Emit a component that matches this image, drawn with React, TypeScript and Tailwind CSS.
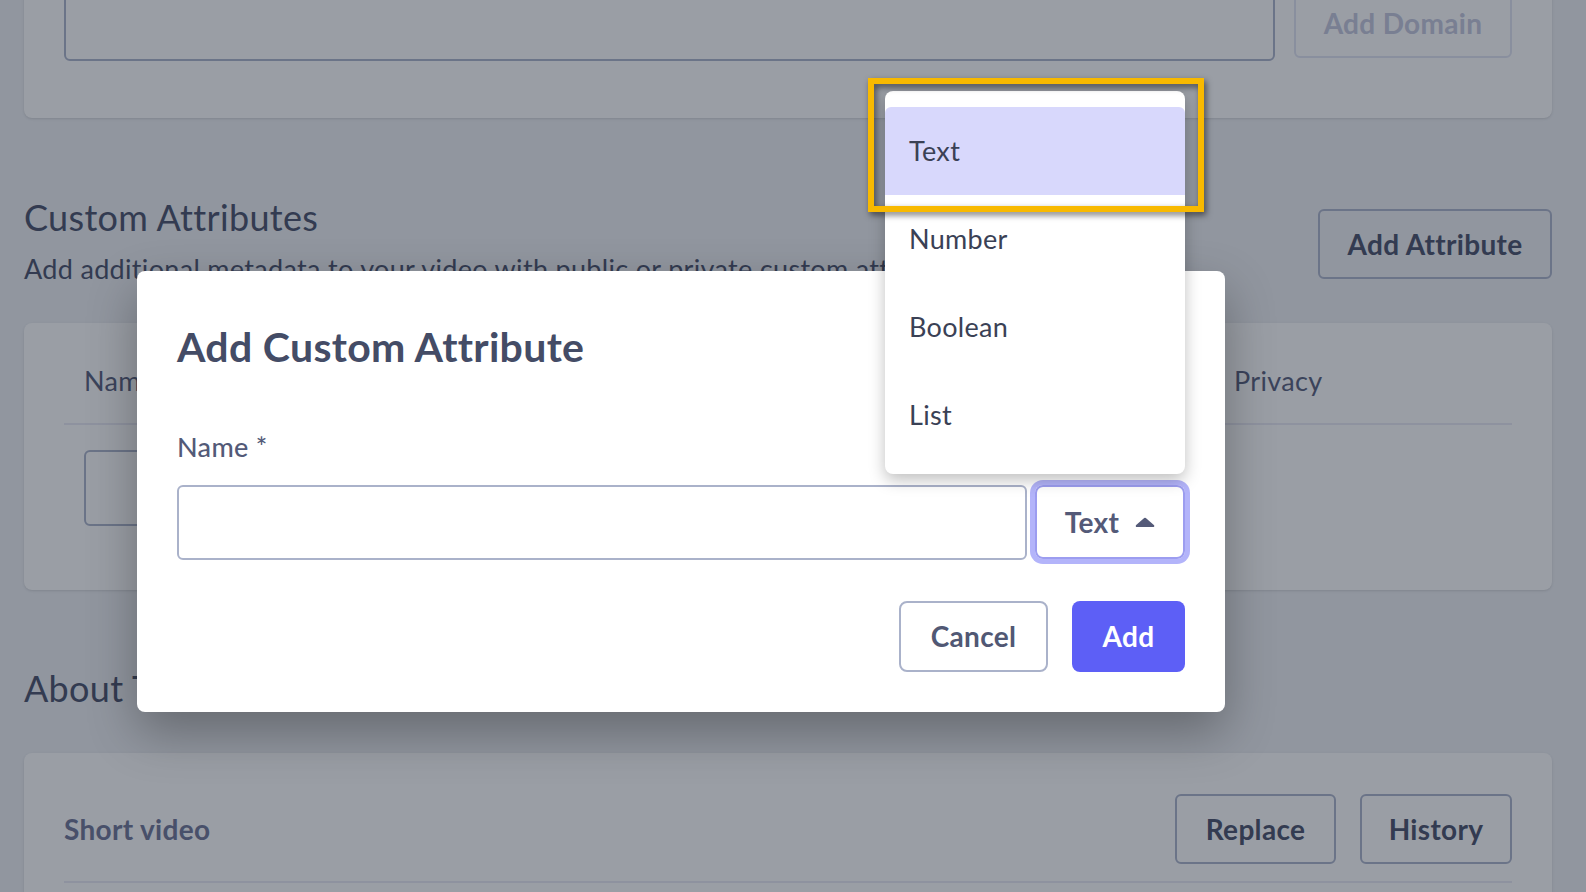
import { ReactNode } from 'react';

// outlined button used on the page behind the modal
function OutlineButton({ children, className }: { children: ReactNode; className?: string }) {
  return (
    <button
      className={`flex h-[70px] items-center justify-center rounded-md border-2 border-[#aab2ca] text-[28px] font-bold text-[#444c66] ${className ?? ''}`}
    >
      {children}
    </button>
  );
}

const types = ['Text', 'Number', 'Boolean', 'List'];

export default function App() {
  return (
    <div className="relative h-[892px] w-full overflow-hidden bg-[#eef0f4] font-['Lato',sans-serif] tracking-[0.02em] text-[#444c66]">
      <main className="pl-6 pr-[34px]">
        {/* domains card (scrolled past) */}
        <section className="-mt-[60px] rounded-lg bg-white px-10 pb-[57px] pt-5 shadow-sm">
          <div className="flex items-start gap-[19px]">
            <div className="h-[101px] flex-1 rounded-md border-2 border-[#aab2ca]" />
            <button className="mt-[28px] h-[70px] w-[218px] rounded-md border-2 border-[#e1e4f3] text-[28px] font-bold text-[#c3c6dd]">
              Add Domain
            </button>
          </div>
        </section>

        {/* custom attributes */}
        <div className="mt-[78px] flex items-start justify-between">
          <div>
            <h2 className="text-[36px] leading-[1.2]">Custom Attributes</h2>
            <p className="mt-[14px] whitespace-nowrap text-[27px] leading-[1.2]">
              Add additional metadata to your video with public or private custom attributes.
            </p>
          </div>
          <OutlineButton className="mt-[13px] w-[234px]">Add Attribute</OutlineButton>
        </div>

        <section className="mt-[37px] rounded-lg bg-white px-10 pb-[64px] pt-[42px] shadow-sm">
          <div className="flex border-b-2 border-[#e9eaf5] px-5 pb-[26px] text-[27px] leading-[1.2] text-[#535a78]">
            <span className="w-[1150px]">Name</span>
            <span>Privacy</span>
          </div>
          <div className="mt-[25px] px-5">
            <div className="h-[76px] w-[600px] rounded-md border-2 border-[#aab2ca]" />
          </div>
        </section>

        {/* about */}
        <h2 className="mt-[77px] text-[36px] leading-[1.2]">About This Video</h2>
        <section className="mt-[43px] rounded-lg bg-white px-10 pb-10 pt-[41px] shadow-sm">
          <div className="flex items-center justify-between">
            <span className="text-[28px] font-bold text-[#6b7194]">Short video</span>
            <div className="flex gap-6">
              <OutlineButton className="w-[161px]">Replace</OutlineButton>
              <OutlineButton className="w-[152px]">History</OutlineButton>
            </div>
          </div>
          <div className="mt-[17px] border-b-2 border-[#e9eaf5]" />
        </section>
      </main>

      {/* overlay */}
      <div className="absolute inset-0 bg-[#1f2937]/45" />

      {/* modal */}
      <div className="absolute left-[137px] top-[271px] w-[1088px] rounded-lg bg-white px-10 pb-10 pt-[51px] shadow-[0_20px_50px_rgba(0,0,0,0.3)]">
        <h3 className="text-[41px] font-bold leading-[1.2] text-[#444c66]">Add Custom Attribute</h3>
        <label className="mt-[60px] block text-[27px] font-medium leading-[1.2] text-[#535a78]">Name *</label>
        <div className="mt-[21px] flex items-center gap-2">
          <input className="h-[75px] flex-1 rounded-md border-2 border-[#aab2ca] px-4 text-[27px] outline-none" />
          <button className="flex h-[74px] w-[150px] items-center justify-center gap-4 rounded-lg border-2 border-[#9c9df0] text-[28px] font-bold text-[#545a78] ring-[5px] ring-[#b3b4fa]">
            Text
            <svg width="20" height="10" viewBox="0 0 20 10">
              <path d="M2 9 L10 2 L18 9 Z" fill="#545a78" stroke="#545a78" strokeWidth="2.5" strokeLinejoin="round" />
            </svg>
          </button>
        </div>
        <div className="mt-[41px] flex justify-end gap-6">
          <button className="h-[71px] w-[149px] rounded-lg border-2 border-[#aab2ca] text-[28px] font-bold text-[#515874]">
            Cancel
          </button>
          <button className="h-[71px] w-[113px] rounded-lg bg-[#5d5ff6] text-[28px] font-bold text-white">Add</button>
        </div>
      </div>

      {/* type menu */}
      <ul className="absolute left-[885px] top-[91px] w-[300px] rounded-lg bg-white pb-[15px] pt-4 shadow-[0_6px_16px_rgba(0,0,0,0.25)]">
        {types.map((t, i) => (
          <li
            key={t}
            className={`flex h-[88px] items-center pl-6 text-[27px] text-[#3a4155] ${i === 0 ? 'rounded-t-md bg-[#d8d8fc]' : ''}`}
          >
            {t}
          </li>
        ))}
      </ul>

      {/* annotation frame */}
      <div className="absolute left-[868px] top-[78px] h-[134px] w-[336px] border-[6px] border-[#f8b900] drop-shadow-[2px_3px_3px_rgba(0,0,0,0.55)]" />
    </div>
  );
}
